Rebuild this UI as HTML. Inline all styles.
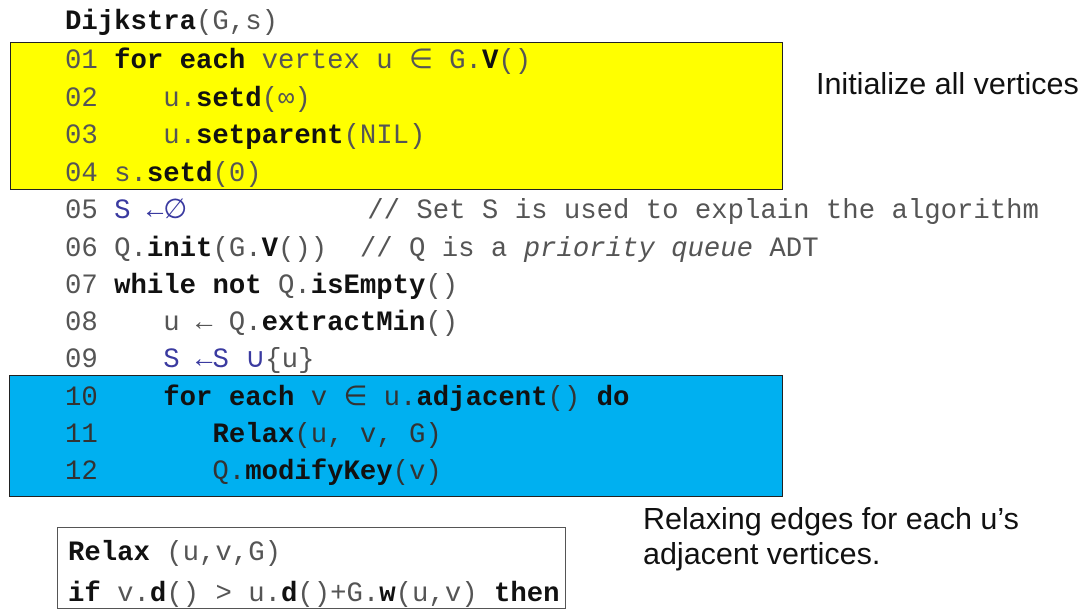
<!DOCTYPE html>
<html><head><meta charset="utf-8"><style>
body{margin:0;width:1089px;height:595px;background:#fff;overflow:hidden;position:relative;font-family:"Liberation Mono",monospace;}
.l{position:absolute;left:65px;white-space:pre;font-size:27.3px;line-height:30px;color:#555;}
b{color:#111;font-weight:bold}
.box{position:absolute;border:1.5px solid #222;}
.s{position:absolute;font-family:"Liberation Sans",Arial,sans-serif;font-size:30.5px;color:#111;white-space:pre;}
.bl{color:#3a3aa0}
</style></head><body>
<div class="box" style="left:10px;top:42px;width:771px;height:146px;background:#ffff00"></div>
<div class="box" style="left:9px;top:375px;width:772px;height:120px;background:#00b0f0"></div>
<div class="box" style="left:57px;top:527px;width:507px;height:80px;background:#fff;border-color:#555"></div>
<div class="l" style="top:8px"><b>Dijkstra</b>(G,s)</div>
<div class="l" style="top:47px">01 <b>for each</b> vertex u ∈ G.<b>V</b>()</div>
<div class="l" style="top:85px">02    u.<b>setd</b>(∞)</div>
<div class="l" style="top:122px">03    u.<b>setparent</b>(NIL)</div>
<div class="l" style="top:160px">04 s.<b>setd</b>(0)</div>
<div class="l" style="top:197px">05 <span class="bl">S ←∅</span>           // Set S is used to explain the algorithm</div>
<div class="l" style="top:235px">06 Q.<b>init</b>(G.<b>V</b>())  // Q is a <i>priority queue</i> ADT</div>
<div class="l" style="top:272px">07 <b>while not</b> Q.<b>isEmpty</b>()</div>
<div class="l" style="top:309px">08    u ← Q.<b>extractMin</b>()</div>
<div class="l" style="top:346px">09    <span class="bl">S ←S ∪</span>{u}</div>
<div class="l" style="top:384px;color:#333">10    <b>for each</b> v ∈ u.<b>adjacent</b>() <b>do</b></div>
<div class="l" style="top:421px;color:#333">11       <b>Relax</b>(u, v, G)</div>
<div class="l" style="top:458px;color:#333">12       Q.<b>modifyKey</b>(v)</div>
<div class="l" style="top:539px;left:68px"><b>Relax</b> (u,v,G)</div>
<div class="l" style="top:580px;left:68px"><b>if</b> v.<b>d</b>() &gt; u.<b>d</b>()+G.<b>w</b>(u,v) <b>then</b></div>
<div class="s" style="left:816px;top:67px">Initialize all vertices</div>
<div class="s" style="left:643px;top:502px">Relaxing edges for each u’s</div>
<div class="s" style="left:643px;top:537px">adjacent vertices.</div>
</body></html>
